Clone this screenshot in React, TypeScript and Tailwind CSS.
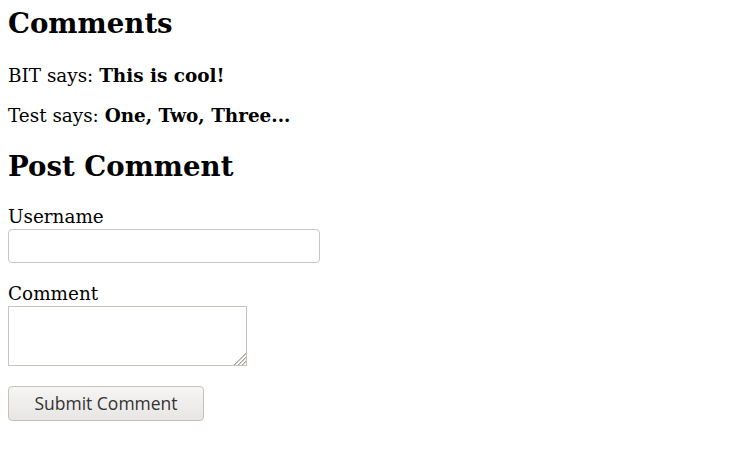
const ResizeGrip = () => (
  <svg
    viewBox="0 0 14 14"
    className="pointer-events-none absolute right-[1px] bottom-[1px] h-[14px] w-[14px]"
  >
    <g stroke="#aaa59f" strokeWidth="1">
      <path d="M2 14 L14 2" />
      <path d="M3 14 L14 3" strokeOpacity="0.6" />
      <path d="M6 14 L14 6" />
      <path d="M7 14 L14 7" strokeOpacity="0.6" />
      <path d="M10 14 L14 10" />
      <path d="M11 14 L14 11" strokeOpacity="0.6" />
    </g>
  </svg>
);

export default function App() {
  return (
    <div className="min-h-[461px] bg-white px-2 pt-[7px] font-['DejaVu_Serif',serif] text-[18.4px] text-black">
      <h2 className="text-[27.6px] leading-[33px] font-bold">Comments</h2>

      <p className="mt-[25px] leading-[21px]">
        BIT says: <b>This is cool!</b>
      </p>
      <p className="mt-[19px] leading-[21px]">
        Test says: <b>One, Two, Three...</b>
      </p>

      <h2 className="mt-[23.5px] text-[27.6px] leading-[33px] font-bold">Post Comment</h2>

      <form className="mt-[23.5px]" onSubmit={(e) => e.preventDefault()}>
        <label className="block leading-[22px]">Username</label>
        <input
          type="text"
          className="mt-[1px] block h-[34px] w-[312px] rounded-[4px] border border-[#c9c6c1] bg-white px-2 outline-none"
        />

        <label className="mt-[20px] block leading-[22px]">Comment</label>
        <div className="relative mt-[1px] h-[60px] w-[239px]">
          <textarea className="block h-full w-full resize-none border border-[#c6c2bc] bg-white outline-none" />
          <ResizeGrip />
        </div>

        <button
          type="submit"
          className="mt-[20px] block h-[35px] w-[196px] rounded-[4px] border border-[#c5c1bc] bg-gradient-to-b from-[#f6f5f4] to-[#e8e6e4] font-['Open_Sans',sans-serif] text-[17.5px] text-[#333]"
        >
          Submit Comment
        </button>
      </form>
    </div>
  );
}
